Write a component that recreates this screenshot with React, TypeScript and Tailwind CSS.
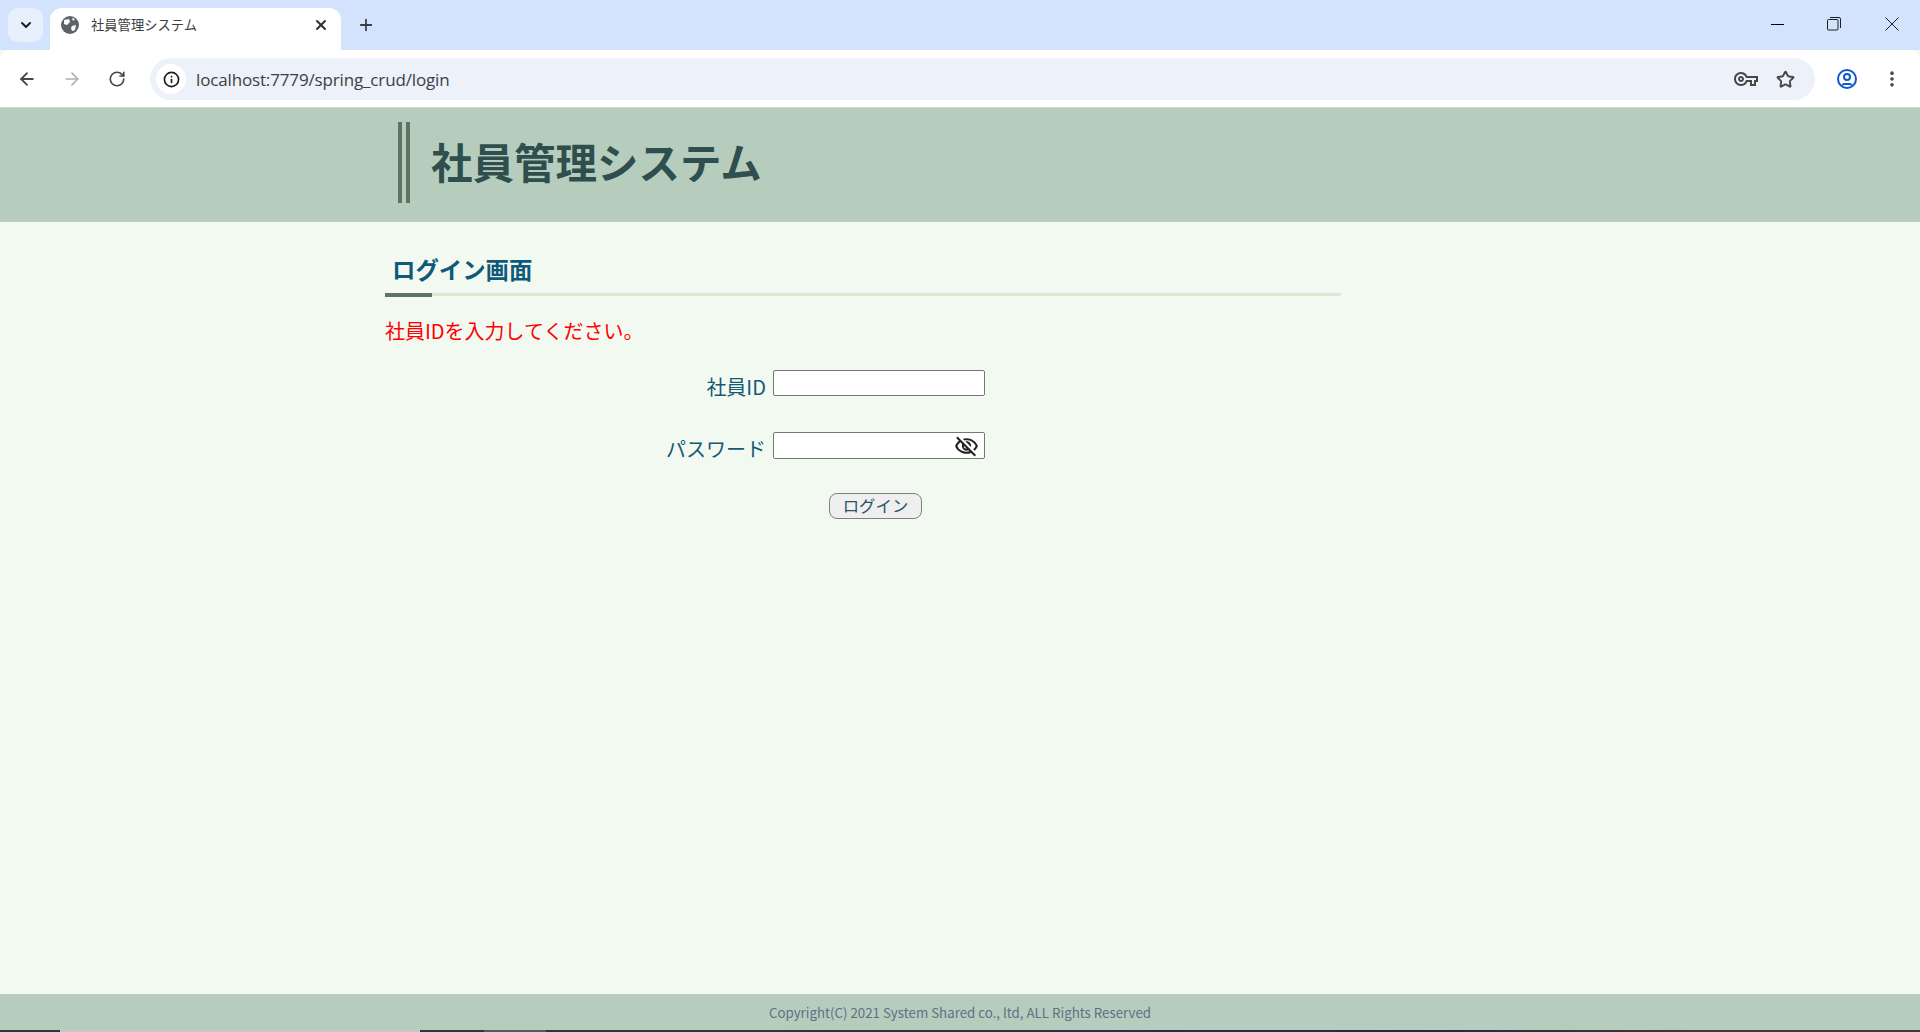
import { ArrowLeft, ArrowRight, ChevronDown, EllipsisVertical, Info, Plus, RotateCw, Star, X } from 'lucide-react';
import { MdOutlineVisibilityOff, MdOutlineVpnKey } from 'react-icons/md';

const jp = 'font-["Noto_Sans_CJK_JP","Noto_Sans",sans-serif]';

const BrowserChrome = () => {
  return (
    <div className="shrink-0">
      <div className="h-[50px] bg-[#d3e3fd] flex items-end relative">
        <div className="absolute left-[8px] top-[8px] w-[35px] h-[34px] rounded-[10px] bg-[#e9f0fd] flex items-center justify-center">
          <ChevronDown size={16} strokeWidth={3} color="#1f1f1f" />
        </div>
        <div className="ml-[50px] w-[291px] h-[42px] bg-white rounded-t-[12px] flex items-center pl-[11px] pr-[12px] pb-[8px]">
          <svg width="18" height="18" viewBox="0 0 18 18" className="shrink-0">
            <circle cx="9" cy="9" r="9" fill="#5f6368" />
            <path d="M3 4 L8 3 L9 6 L6 9 L3 8 Z M11 10 L15 9 L14 14 L11 15 L10 12 Z M11 2 L14 3 L12 5 Z" fill="#fff" />
          </svg>
          <span className={`ml-[12px] text-[13.3px] text-[#3c4043] flex-1 ${jp}`}>社員管理システム</span>
          <X size={16} strokeWidth={3} color="#303134" className="-ml-[1px]" />
        </div>
        <div className="ml-[13px] mb-[6px] w-[24px] h-[38px] flex items-center justify-center">
          <Plus size={18} strokeWidth={2.4} color="#3c4043" />
        </div>
        <div className="ml-auto h-full flex items-start">
          <div className="w-[57px] h-[48px] flex items-center justify-center">
            <div className="w-[13px] h-[1px] bg-black"></div>
          </div>
          <div className="w-[57px] h-[48px] flex items-center justify-center pr-[2px]">
            <svg width="14" height="14" viewBox="0 0 14 14" fill="none" stroke="#1f1f1f">
              <rect x="0.5" y="2.5" width="10.5" height="10.5" rx="1" />
              <path d="M3 .5 H12 A1.5 1.5 0 0 1 13.5 2 V11" />
            </svg>
          </div>
          <div className="w-[57px] h-[48px] flex items-center justify-center">
            <svg width="14" height="14" viewBox="0 0 14 14" stroke="#1f1f1f"><path d="M.5 .5 L13.5 13.5 M13.5 .5 L.5 13.5" /></svg>
          </div>
        </div>
      </div>
      <div className="h-[58px] bg-white rounded-t-[10px] flex items-center pl-[17px] border-b border-[#d3dbd3] pt-[1px]">
        <ArrowLeft size={20} strokeWidth={2.2} color="#474747" />
        <ArrowRight size={20} strokeWidth={2} color="#b0b0b0" className="ml-[25px]" />
        <RotateCw size={18} strokeWidth={2.2} color="#474747" className="ml-[26px]" />
        <div className="ml-[24px] w-[1665px] h-[42px] rounded-full bg-[#ecf1fa] flex items-center pl-[6px] pr-[20px]">
          <div className="w-[30px] h-[30px] rounded-full bg-white flex items-center justify-center">
            <Info size={17} strokeWidth={2.4} color="#1f1f1f" />
          </div>
          <span className="ml-[10px] mt-[1px] text-[17px] text-[#3c4043] font-['Open_Sans',sans-serif] tracking-[-0.15px] flex-1">localhost:7779/spring_crud/login</span>
          <MdOutlineVpnKey size={24} color="#474747" />
          <Star size={19} strokeWidth={2.4} color="#474747" className="ml-[18px]" />
        </div>
        <div className="ml-[22px] w-[20px] h-[20px] rounded-full border-[2px] border-[#0b57d0] relative overflow-hidden">
          <div className="absolute left-[4px] top-[2px] w-[8px] h-[8px] rounded-full border-[2px] border-[#0b57d0]"></div>
          <div className="absolute left-[1px] top-[12px] w-[14px] h-[10px] rounded-full border-[2px] border-[#0b57d0]"></div>
        </div>
        <EllipsisVertical size={20} strokeWidth={2.4} color="#474747" className="ml-[25px]" />
      </div>
    </div>
  );
};

const App = () => {
  return (
    <div className={`h-screen flex flex-col bg-[#f2f9f1] overflow-hidden ${jp}`}>
      <BrowserChrome />

      <header className="h-[114px] shrink-0 bg-[#b6cdbd] pt-[14px] pl-[398px]">
        <div className="border-l-[12px] border-double border-[#5f7360] h-[81px] pl-[21px] pb-[2px] flex items-center">
          <h1 className="text-[41.5px] font-bold text-[#2f4f4f] leading-none">社員管理システム</h1>
        </div>
      </header>

      <main className="flex-1 pl-[385px]">
        <div className="w-[956px]">
          <h2 className="mt-[28px] pl-[7px] h-[43px] text-[23.4px] font-bold text-[#0f5a78] leading-[39px]">ログイン画面</h2>
          <div className="h-[3px] bg-[#dce8d0] relative">
            <div className="absolute left-0 -top-[0.5px] h-[4px] w-[47px] bg-[#5f7360]"></div>
          </div>
          <p className="mt-[20px] text-[20px] leading-[30px] text-[#ff0000]">社員IDを入力してください。</p>

          <form className="mt-[24px] text-[20px] text-[#155a73]">
            <div className="flex h-[62px] items-start">
              <label className="w-[381px] text-right leading-[30px] pt-[2px]">社員ID</label>
              <input type="text" className="ml-[7px] w-[212px] h-[26px] bg-white border border-[#767676] rounded-[2px]" />
            </div>
            <div className="flex h-[61px] items-start">
              <label className="w-[381px] text-right leading-[30px] pt-[2px]">パスワード</label>
              <div className="ml-[7px] w-[212px] h-[27px] bg-white border border-[#767676] rounded-[2px] flex items-center justify-end pr-[5px] pt-[1px]">
                <MdOutlineVisibilityOff size={25} color="#222" />
              </div>
            </div>
            <div className="flex pl-[444px]">
              <button type="button" className="w-[93px] h-[26px] bg-[#efefef] border border-[#808080] rounded-[8px] text-[16.4px] leading-none pb-[2px] text-[#2c5266]">ログイン</button>
            </div>
          </form>
        </div>
      </main>

      <footer className="h-[36px] shrink-0 bg-[#b6cdbd] text-center text-[13.3px] leading-[38px] text-[#5f6f85]">
        Copyright(C) 2021 System Shared co., ltd, ALL Rights Reserved
      </footer>
      <div className="h-[2px] shrink-0 flex bg-[linear-gradient(90deg,#1f3a40_0%,#1f3a40_40%,#1e2c48_75%,#3a3a36_88%,#3a3a36_100%)]">
        <div className="ml-[60px] w-[360px] bg-[#c8c8c8]"></div>
        <div className="ml-[64px] w-[62px] bg-[#4a5e64]"></div>
      </div>
    </div>
  );
};

export default App;
